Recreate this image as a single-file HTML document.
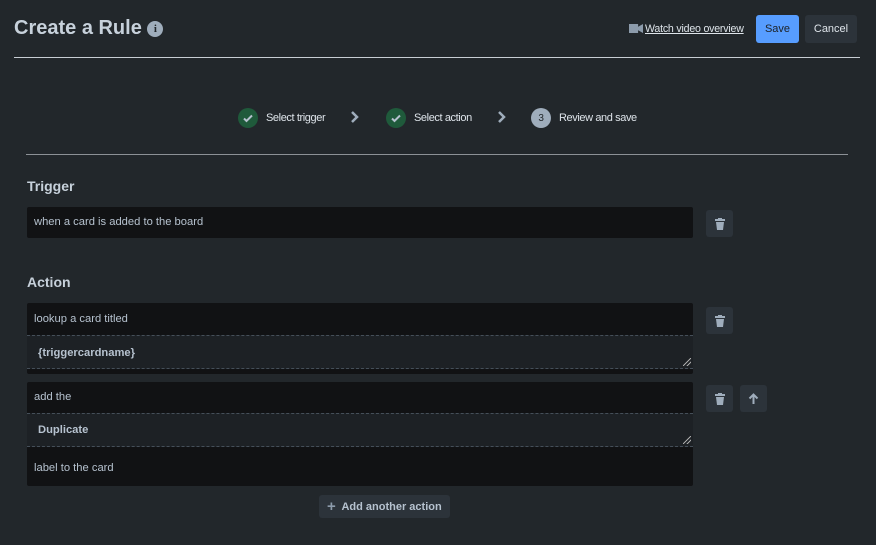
<!DOCTYPE html>
<html><head><style>
*{box-sizing:border-box;margin:0;padding:0}
body{width:876px;height:545px;background:#22272b;font-family:"Liberation Sans",Arial,sans-serif;color:#b6c2cf;position:relative;overflow:hidden;font-size:11.2px}
.a{position:absolute}
.box{position:absolute;left:27px;width:666px;background:#111214;border-radius:2px}
.row{height:32px;line-height:32px;padding-left:7px}
.ta{background:#1d2125;border-top:1px dashed #454f59;border-bottom:1px dashed #454f59;padding-left:11px;font-weight:bold;position:relative}
.ta:after{content:"";position:absolute;right:2px;bottom:2px;width:8px;height:8px;background:linear-gradient(135deg,transparent 45%,#aaa 45%,#aaa 55%,transparent 55%,transparent 70%,#aaa 70%,#aaa 80%,transparent 80%)}
.btn{position:absolute;width:27px;height:27px;background:#2c333a;border-radius:3px;display:flex;align-items:center;justify-content:center}
.h{position:absolute;left:27px;font-size:14px;font-weight:bold;color:#c7d1db}
.ck{width:20px;height:20px;border-radius:50%;background:#1f5a3b;display:inline-flex;align-items:center;justify-content:center;vertical-align:middle}
.step{position:absolute;top:108px;display:flex;align-items:center;gap:8px;font-size:11px;color:#dee4ea;letter-spacing:-0.4px}
</style></head><body>
<div class="a" style="left:14px;top:17px;font-size:20px;font-weight:bold;color:#c7d1db">Create a Rule <span style="display:inline-block;width:16px;height:16px;border-radius:50%;background:#9fadbc;color:#22272b;font-size:11px;text-align:center;line-height:16px;font-family:'Liberation Serif',serif;vertical-align:2px">i</span></div>
<div class="a" style="left:629px;top:23px;font-size:10.6px;color:#dee4ea;letter-spacing:-0.2px"><span style="display:inline-block;width:14px;height:9px;background:#8c9bab;vertical-align:-1px;margin-right:2px;clip-path:polygon(0 0,65% 0,65% 30%,100% 0,100% 100%,65% 70%,65% 100%,0 100%)"></span><u>Watch video overview</u></div>
<div class="a" style="left:756px;top:15px;width:43px;height:28px;background:#579dff;border-radius:3px;color:#1d2125;line-height:28px;text-align:center;font-size:11px">Save</div>
<div class="a" style="left:805px;top:15px;width:52px;height:28px;background:#2c333a;border-radius:3px;color:#dee4ea;line-height:28px;text-align:center;font-size:11px">Cancel</div>
<div class="a" style="left:14px;top:57px;width:846px;height:1px;background:#c7cdd3"></div>
<div class="step" style="left:238px"><span class="ck"><svg width="12" height="12" viewBox="0 0 12 12"><path d="M2 6.5l2.5 2.5L10 3.5" stroke="#b6c2cf" stroke-width="2" fill="none"/></svg></span>Select trigger</div>
<svg class="a" style="left:350px;top:111px" width="10" height="12" viewBox="0 0 10 12"><path d="M2 1l5 5-5 5" stroke="#9fadbc" stroke-width="2.5" fill="none"/></svg>
<div class="step" style="left:386px"><span class="ck"><svg width="12" height="12" viewBox="0 0 12 12"><path d="M2 6.5l2.5 2.5L10 3.5" stroke="#b6c2cf" stroke-width="2" fill="none"/></svg></span>Select action</div>
<svg class="a" style="left:497px;top:111px" width="10" height="12" viewBox="0 0 10 12"><path d="M2 1l5 5-5 5" stroke="#9fadbc" stroke-width="2.5" fill="none"/></svg>
<div class="step" style="left:531px"><span class="ck" style="background:#9fadbc;color:#22272b;font-size:10px">3</span>Review and save</div>
<div class="a" style="left:26px;top:154px;width:822px;height:1px;background:#8c9196"></div>
<div class="h" style="top:178px">Trigger</div>
<div class="box" style="top:207px;height:31px"><div class="row" style="height:31px;line-height:31px">when a card is added to the board</div></div>
<div class="h" style="top:274px">Action</div>
<div class="box" style="top:303px;height:71px"><div class="row">lookup a card titled</div><div class="ta row" style="height:34px;line-height:34px">{triggercardname}</div></div>
<div class="box" style="top:382px;height:104px"><div class="row" style="height:31px;line-height:31px">add the</div><div class="ta row" style="height:34px;line-height:32px">Duplicate</div><div class="row" style="height:39px;line-height:42px">label to the card</div></div>
<div class="btn" style="left:706px;top:210px"><svg width="10" height="12" viewBox="0 0 10 12"><rect x="0" y="1" width="10" height="2" fill="#9fadbc"/><rect x="3" y="0" width="4" height="2" fill="#9fadbc"/><path d="M1 4h8l-1 8H2z" fill="#9fadbc"/></svg></div>
<div class="btn" style="left:706px;top:307px"><svg width="10" height="12" viewBox="0 0 10 12"><rect x="0" y="1" width="10" height="2" fill="#9fadbc"/><rect x="3" y="0" width="4" height="2" fill="#9fadbc"/><path d="M1 4h8l-1 8H2z" fill="#9fadbc"/></svg></div>
<div class="btn" style="left:706px;top:385px"><svg width="10" height="12" viewBox="0 0 10 12"><rect x="0" y="1" width="10" height="2" fill="#9fadbc"/><rect x="3" y="0" width="4" height="2" fill="#9fadbc"/><path d="M1 4h8l-1 8H2z" fill="#9fadbc"/></svg></div>
<div class="btn" style="left:740px;top:385px"><svg width="11" height="11" viewBox="0 0 11 11"><path d="M5.5 11V1.5M1.5 5.5l4-4 4 4" stroke="#9fadbc" stroke-width="2" fill="none"/></svg></div>
<div class="a" style="left:319px;top:495px;width:131px;height:23px;background:#2c333a;border-radius:3px;font-size:11px;font-weight:bold;line-height:23px;color:#b6c2cf;padding-left:8px"><span style="font-size:15px;color:#8c9bab;vertical-align:-1px">+</span>&nbsp; Add another action</div>
</body></html>
